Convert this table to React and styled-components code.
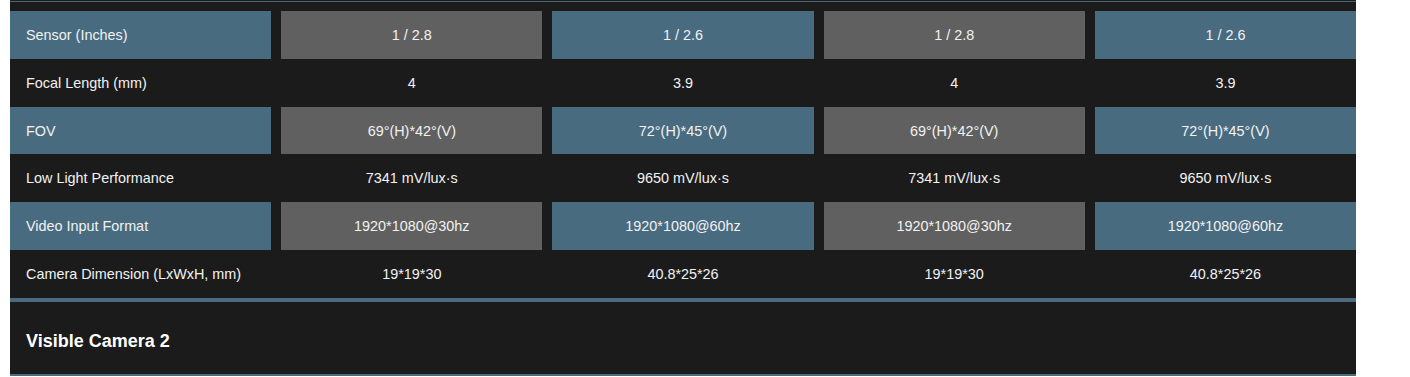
import styled, { createGlobalStyle } from 'styled-components';

const GlobalStyle = createGlobalStyle`
  body {
    margin: 0;
    background: #ffffff;
    font-family: "Liberation Sans", Arial, sans-serif;
  }
`;

const specs = [
  { label: 'Sensor (Inches)', values: ['1 / 2.8', '1 / 2.6', '1 / 2.8', '1 / 2.6'] },
  { label: 'Focal Length (mm)', values: ['4', '3.9', '4', '3.9'] },
  { label: 'FOV', values: ['69°(H)*42°(V)', '72°(H)*45°(V)', '69°(H)*42°(V)', '72°(H)*45°(V)'] },
  { label: 'Low Light Performance', values: ['7341 mV/lux·s', '9650 mV/lux·s', '7341 mV/lux·s', '9650 mV/lux·s'] },
  { label: 'Video Input Format', values: ['1920*1080@30hz', '1920*1080@60hz', '1920*1080@30hz', '1920*1080@60hz'] },
  { label: 'Camera Dimension (LxWxH, mm)', values: ['19*19*30', '40.8*25*26', '19*19*30', '40.8*25*26'] },
];

function App() {
  return (
    <>
      <GlobalStyle />
      <Panel>
        <TopRule />
        <SpecGrid>
          {specs.map((row, i) => {
            const shaded = i % 2 === 0;
            return [
              <LabelCell key={row.label} $shaded={shaded}>{row.label}</LabelCell>,
              ...row.values.map((v, j) => (
                <ValueCell
                  key={row.label + j}
                  $tone={shaded ? (j % 2 === 0 ? 'grey' : 'blue') : 'none'}
                >
                  {v}
                </ValueCell>
              )),
            ];
          })}
        </SpecGrid>
        <SectionHead>Visible Camera 2</SectionHead>
      </Panel>
    </>
  );
}

export default App;

const Panel = styled.div`
  margin-left: 10px;
  width: 1346px;
  background: #1b1b1b;
  color: #f2f2f2;
  padding-top: 1px;
`;

const TopRule = styled.div`
  height: 1px;
  background: #4a6678;
  margin-bottom: 9px;
`;

const SpecGrid = styled.div`
  display: grid;
  grid-template-columns: repeat(5, 1fr);
  grid-auto-rows: 47.83px;
  column-gap: 10px;
  border-bottom: 4px solid #4a6b80;
`;

const LabelCell = styled.div`
  display: flex;
  align-items: center;
  padding-left: 16px;
  font-size: 14.4px;
  background: ${(p) => (p.$shaded ? '#486b80' : 'transparent')};
`;

const tones = { grey: '#606060', blue: '#486b80', none: 'transparent' };

const ValueCell = styled.div`
  display: flex;
  align-items: center;
  justify-content: center;
  font-size: 14.4px;
  background: ${(p) => tones[p.$tone]};
`;

const SectionHead = styled.div`
  height: 74px;
  box-sizing: border-box;
  padding: 8px 16px 0;
  display: flex;
  align-items: center;
  font-size: 18px;
  font-weight: bold;
  color: #ffffff;
  border-bottom: 2px solid #486b80;
`;
